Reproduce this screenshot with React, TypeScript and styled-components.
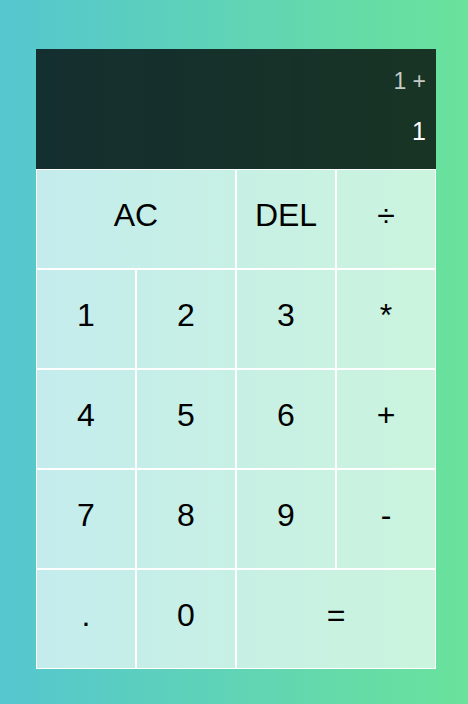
import React, { FunctionComponent } from 'react';
import styled, { createGlobalStyle } from 'styled-components';

const GlobalStyle = createGlobalStyle`
  *, *::before, *::after {
    box-sizing: border-box;
    font-family: 'Liberation Sans', Arial, sans-serif;
    font-weight: normal;
  }

  body {
    margin: 0;
    background: linear-gradient(to right, #55c6cf, #6ae29b);
  }
`;

const CalculatorGrid = styled.div`
  display: grid;
  justify-content: center;
  align-content: center;
  min-height: 100vh;
  padding: 14px 0 0 4px;
  grid-template-columns: repeat(4, 100px);
  grid-template-rows: minmax(120px, auto) repeat(5, 100px);
`;

const Output = styled.div`
  grid-column: 1 / -1;
  background-color: rgba(0, 0, 0, 0.77);
  display: flex;
  flex-direction: column;
  align-items: flex-end;
  justify-content: space-around;
  padding: 10px;
  word-wrap: break-word;
  word-break: break-all;
`;

const PreviousOperand = styled.div`
  color: rgba(255, 255, 255, 0.75);
  font-size: 23px;
  margin-top: -2px;
`;

const CurrentOperand = styled.div`
  color: white;
  font-size: 25px;
  margin-bottom: 2px;
`;

const Key = styled.button<{ $wide?: boolean }>`
  cursor: pointer;
  font-size: 32px;
  color: black;
  border: 1px solid white;
  outline: none;
  background-color: rgba(255, 255, 255, 0.65);
  padding: 0 0 7px;
  margin: 0;
  grid-column: ${(p) => (p.$wide ? 'span 2' : 'auto')};

  &:hover {
    background-color: rgba(255, 255, 255, 0.9);
  }
`;

interface KeyDef {
  label: string;
  wide?: boolean;
}

const keys: KeyDef[] = [
  { label: 'AC', wide: true },
  { label: 'DEL' },
  { label: '÷' },
  { label: '1' },
  { label: '2' },
  { label: '3' },
  { label: '*' },
  { label: '4' },
  { label: '5' },
  { label: '6' },
  { label: '+' },
  { label: '7' },
  { label: '8' },
  { label: '9' },
  { label: '-' },
  { label: '.' },
  { label: '0' },
  { label: '=', wide: true },
];

const App: FunctionComponent = () => {
  return (
    <>
      <GlobalStyle />
      <CalculatorGrid>
        <Output>
          <PreviousOperand>1 +</PreviousOperand>
          <CurrentOperand>1</CurrentOperand>
        </Output>
        {keys.map((key) => (
          <Key key={key.label} $wide={key.wide}>
            {key.label}
          </Key>
        ))}
      </CalculatorGrid>
    </>
  );
};

export default App;
